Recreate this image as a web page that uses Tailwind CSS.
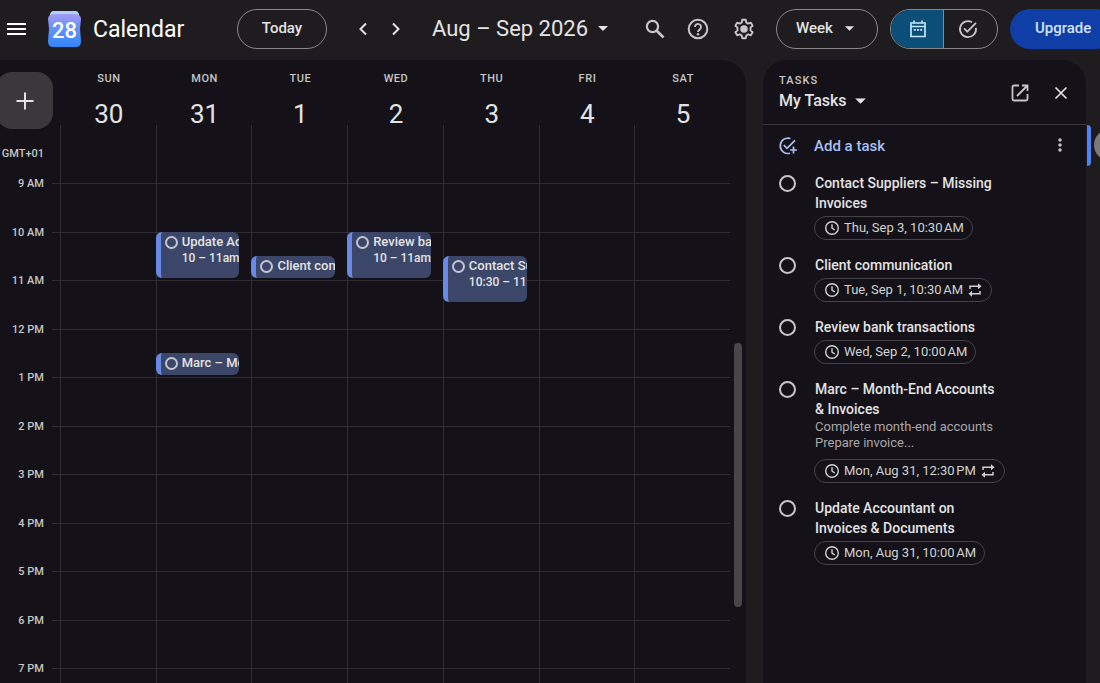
<!DOCTYPE html>
<html lang="en">
<head>
  <meta charset="UTF-8" />
  <meta name="viewport" content="width=device-width, initial-scale=1.0"/>
  <title>Calendar</title>
  <script src="https://cdn.jsdelivr.net/npm/@tailwindcss/browser@4"></script>
</head>
<body class="h-screen overflow-hidden flex flex-col bg-[#1e1c1e] text-[#e3e3e3] font-['Roboto',sans-serif]">

  <!-- icons used more than once -->
  <svg class="hidden">
    <symbol id="clock" viewBox="0 0 16 16">
      <circle cx="8" cy="8" r="6.3" fill="none" stroke="currentColor" stroke-width="1.4"/>
      <path d="M8 4.2V8.2L10.8 10" fill="none" stroke="currentColor" stroke-width="1.4"/>
    </symbol>
    <symbol id="repeat" viewBox="0 0 16 16">
      <path fill="none" stroke="currentColor" stroke-width="1.5" d="M3 7V4.200h9M13 9v2.800H4"/>
      <path fill="currentColor" d="M11 1.200l3.500 3L11 7.200zM5 8.800l-3.500 3 3.500 3z"/>
    </symbol>
    <symbol id="caret" viewBox="0 0 10 5">
      <path fill="currentColor" d="M0 0h10L5 5z"/>
    </symbol>
  </svg>

  <!-- Top bar -->
  <header class="h-[60px] shrink-0 pb-[3px] pl-[4px] flex items-center overflow-hidden whitespace-nowrap">
    <button aria-label="Main menu" class="w-6 shrink-0 flex justify-center text-white">
      <svg class="size-6" viewBox="0 0 24 24"><path fill="currentColor" d="M3 6h19v2H3zM3 11h19v2H3zM3 16h19v2H3z"/></svg>
    </button>
    <a href="#" class="ml-5 shrink-0 flex items-center gap-3 text-white">
      <svg class="w-[33px] h-9" viewBox="0 0 33 36">
        <defs>
          <linearGradient id="logoFill" x1="0" y1="0" x2="0" y2="1">
            <stop offset="0" stop-color="#a79af5"/>
            <stop offset="0.35" stop-color="#6f93f8"/>
            <stop offset="1" stop-color="#3185fc"/>
          </linearGradient>
        </defs>
        <path fill="#a9d3fc" d="M5 0h23q2 0 3 3v4H2V3q1-3 3-3z"/>
        <path fill="url(#logoFill)" d="M0 8q0-4 5-5h23q5 1 5 5l-1 10 1 12q0 6-5 6H5q-5 0-5-6l1-12z"/>
        <text x="16.5" y="27" text-anchor="middle" font-size="22" font-family="Roboto" font-weight="500" fill="#fff">28</text>
      </svg>
      <span class="w-[90px] pt-[3px] text-[23px]">Calendar</span>
    </a>
    <button class="ml-[54px] w-[90px] h-10 shrink-0 rounded-full border border-[#8a888b] text-[15px] font-medium">Today</button>
    <button aria-label="Previous week" class="ml-6 w-6 shrink-0">
      <svg class="size-6" viewBox="0 0 24 24"><path fill="none" stroke="currentColor" stroke-width="2" d="M15 6.5L9.5 12l5.500 5.500"/></svg>
    </button>
    <button aria-label="Next week" class="ml-[9px] w-6 shrink-0">
      <svg class="size-6" viewBox="0 0 24 24"><path fill="none" stroke="currentColor" stroke-width="2" d="M9 6.500L14.500 12L9 17.500"/></svg>
    </button>
    <button class="ml-6 w-[176px] shrink-0 flex items-center justify-between text-[22px]">
      Aug – Sep 2026
      <svg class="w-[10px] h-[5px]"><use href="#caret"/></svg>
    </button>
    <button aria-label="Search" class="ml-[35px] w-6 shrink-0 text-[#c7c5c8]">
      <svg class="size-6" viewBox="0 0 24 24"><circle cx="9.500" cy="9.500" r="5.600" fill="none" stroke="currentColor" stroke-width="2.200"/><path stroke="currentColor" stroke-width="2.600" d="M13.500 13.500L20.500 20.500"/></svg>
    </button>
    <button aria-label="Support" class="ml-[19px] w-6 shrink-0 text-[#c7c5c8]">
      <svg class="size-6" viewBox="0 0 24 24"><circle cx="12" cy="12" r="9.300" fill="none" stroke="currentColor" stroke-width="2"/><path fill="none" stroke="currentColor" stroke-width="1.900" d="M9 10a3 3 0 1 1 4.700 2.400C12.500 13.300 12 13.700 12 15"/><circle cx="12" cy="17.200" r="1.200" fill="currentColor"/></svg>
    </button>
    <button aria-label="Settings" class="ml-[22px] w-6 shrink-0 text-[#c7c5c8]">
      <svg class="size-6" viewBox="0 0 24 24"><path fill="none" stroke="currentColor" stroke-width="1.900" stroke-linejoin="round" d="M10.200 2.800h3.600l.5 2.700 1.900 1.100 2.600-.9 1.800 3.100-2.100 1.800v2.800l2.100 1.800-1.800 3.100-2.600-.9-1.900 1.100-.5 2.700h-3.600l-.5-2.700-1.900-1.100-2.600.9-1.800-3.100 2.100-1.800v-2.800L3.400 8.800l1.800-3.100 2.600.9 1.900-1.100z"/><circle cx="12" cy="12" r="3.800" fill="currentColor"/></svg>
    </button>
    <button class="ml-5 w-[102px] h-10 shrink-0 rounded-full border border-[#8a888b] flex items-center justify-center gap-3 pr-1 text-[15px] font-medium">
      Week
      <svg class="w-[9px] h-[5px]"><use href="#caret"/></svg>
    </button>
    <div class="ml-3 w-[108px] h-10 shrink-0 flex rounded-full border border-[#8a888b] overflow-hidden">
      <button aria-label="Calendar view" class="w-[53px] pl-[2px] flex items-center justify-center border-r border-[#8a888b] bg-[#0b4f78] text-[#c2e7ff]">
        <svg class="size-5" viewBox="0 0 20 20"><path fill="none" stroke="currentColor" stroke-width="1.700" d="M3 4h14v13.500H3zM3 7.500h14M6 1.500V4M14 1.500V4"/><path fill="currentColor" d="M5.800 10h2v1.800h-2zM9 10h2v1.800H9zM12.200 10h2v1.800h-2z"/></svg>
      </button>
      <button aria-label="Tasks view" class="flex-1 flex items-center justify-center pr-[6px] text-[#c7c5c8]">
        <svg class="size-5" viewBox="0 0 20 20"><path fill="none" stroke="currentColor" stroke-width="1.800" d="M14 3.200A8 8 0 1 0 17.900 8.800M6 9.300l3.300 3.300L18 3.800"/></svg>
      </button>
    </div>
    <button class="ml-3 px-[25px] h-10 shrink-0 rounded-full bg-[#0f3fa6] text-[15px] font-medium text-[#d3e3fd]">Upgrade</button>
  </header>

  <div class="flex-1 min-h-0 flex">
    <!-- Week view -->
    <main class="flex-1 min-w-0 flex flex-col overflow-hidden rounded-tr-3xl bg-[#141218]">
      <div class="h-[123px] shrink-0 flex pr-4">
        <div class="w-[60px] shrink-0 flex flex-col justify-between pt-3 pb-[21px]">
          <button aria-label="Create" class="-ml-1 w-[57px] h-[57px] rounded-2xl bg-[#3a383c] flex items-center justify-center">
            <svg class="size-6" viewBox="0 0 24 24"><path stroke="currentColor" stroke-width="2" d="M12 3.500v17M3.500 12h17"/></svg>
          </button>
          <span class="pr-4 text-right text-[11px] leading-4 font-medium text-[#c4c7c5]">GMT+01</span>
        </div>
        <div id="dayHeads" class="flex-1 grid grid-cols-7"></div>
      </div>

      <div class="flex-1 min-h-0 flex">
        <div id="hourLabels" class="w-[60px] shrink-0 h-[534px] grid grid-rows-11"></div>
        <div id="weekGrid" class="flex-1 h-[534px] grid grid-cols-7 grid-rows-[repeat(22,minmax(0,1fr))]"></div>
        <div class="w-4 shrink-0 flex justify-center pt-[160px]">
          <div class="w-2 h-[264px] rounded-full bg-[#484649]"></div>
        </div>
      </div>
    </main>

    <!-- Tasks panel -->
    <aside class="ml-[17px] w-[323px] shrink-0 rounded-t-3xl bg-[#141218]">
      <div class="h-[65px] pt-[2px] pl-4 pr-[13px] flex items-center justify-between border-b border-[#38363a]">
        <div>
          <h2 class="text-[11px] leading-4 font-medium tracking-widest text-[#c4c7c5]">TASKS</h2>
          <button class="flex items-center gap-2 text-[16px] leading-6 font-medium">
            My Tasks
            <svg class="w-[11px] h-[6px]" viewBox="0 0 10 5"><use href="#caret"/></svg>
          </button>
        </div>
        <div class="flex gap-[17px]">
          <button aria-label="Open in full screen" class="text-[#c7c5c8]">
            <svg class="size-6" viewBox="0 0 24 24"><path fill="none" stroke="currentColor" stroke-width="1.800" d="M11 4.500H6A1.500 1.500 0 0 0 4.500 6v12A1.500 1.500 0 0 0 6 19.500h12a1.500 1.500 0 0 0 1.500-1.500v-5M14 4.500h5.500V10M19.500 4.500L9 15"/></svg>
          </button>
          <button aria-label="Close">
            <svg class="size-6" viewBox="0 0 24 24"><path fill="none" stroke="currentColor" stroke-width="1.700" d="M6.500 6.500l11 11M17.500 6.500l-11 11"/></svg>
          </button>
        </div>
      </div>

      <div class="h-[42px] pl-[15px] pr-[14px] flex items-center justify-between">
        <button class="flex items-center gap-4 text-[15px] font-medium text-[#a8c0f5]">
          <svg class="size-5" viewBox="0 0 20 20"><path fill="none" stroke="currentColor" stroke-width="1.700" d="M12.500 2.500A7.700 7.700 0 1 0 12 17.200M5.800 9.200l3.200 3.200L17 4.300M15.500 10.500v7M12 14h7"/></svg>
          Add a task
        </button>
        <button aria-label="List options" class="text-[#c7c5c8]">
          <svg class="size-6" viewBox="0 0 24 24"><g fill="currentColor"><circle cx="12" cy="6" r="1.700"/><circle cx="12" cy="11" r="1.700"/><circle cx="12" cy="16" r="1.700"/></g></svg>
        </button>
      </div>

      <ul id="taskList" class="pt-[6px] pl-4 pr-[84px] flex flex-col gap-[15px]"></ul>
    </aside>

    <!-- Side strip -->
    <nav class="w-[14px] shrink-0 pt-[65px] pl-[1px] flex items-start gap-[3px] overflow-hidden">
      <div class="w-1 h-[41px] shrink-0 rounded-r-sm bg-[#4c84f5]"></div>
      <button aria-label="Account" class="mt-1 size-8 shrink-0 rounded-full bg-[#7b797b]"></button>
    </nav>
  </div>

  <script>
    const days = [['SUN', 30], ['MON', 31], ['TUE', 1], ['WED', 2], ['THU', 3], ['FRI', 4], ['SAT', 5]];
    const hours = ['9 AM', '10 AM', '11 AM', '12 PM', '1 PM', '2 PM', '3 PM', '4 PM', '5 PM', '6 PM', '7 PM'];

    // col = day of week, row = half hours since 9 AM, span in half hours
    const events = [
      { title: 'Update Accountant on Invoices', time: '10 – 11am', col: 2, row: 3, span: 2 },
      { title: 'Client communication', time: '', col: 3, row: 4, span: 1 },
      { title: 'Review bank transactions', time: '10 – 11am', col: 4, row: 3, span: 2 },
      { title: 'Contact Suppliers', time: '10:30 – 11:30am', col: 5, row: 4, span: 2 },
      { title: 'Marc – Month-End Accounts', time: '', col: 2, row: 8, span: 1 },
    ];

    const tasks = [
      { title: 'Contact Suppliers – Missing Invoices', due: 'Thu, Sep 3, 10:30\u202fAM' },
      { title: 'Client communication', due: 'Tue, Sep 1, 10:30\u202fAM', repeat: true },
      { title: 'Review bank transactions', due: 'Wed, Sep 2, 10:00\u202fAM' },
      { title: 'Marc – Month-End Accounts &amp; Invoices', notes: 'Complete month-end accounts<br>Prepare invoice...', due: 'Mon, Aug 31, 12:30\u202fPM', repeat: true },
      { title: 'Update Accountant on Invoices &amp; Documents', due: 'Mon, Aug 31, 10:00\u202fAM' },
    ];

    document.getElementById('dayHeads').innerHTML = days.map(([name, num]) => `
      <div class="flex flex-col">
        <div class="h-[65px] pt-[11px] pl-[2px] flex flex-col items-center">
          <span class="text-[11px] leading-4 font-medium tracking-wider text-[#c4c7c5]">${name}</span>
          <span class="pt-[11px] text-[26px] leading-8">${num}</span>
        </div>
        <div class="flex-1 border-l border-[#302e33]"></div>
      </div>`).join('');

    document.getElementById('hourLabels').innerHTML = hours.map(h => `
      <div class="flex items-start justify-end gap-2">
        <span class="-mt-[7px] text-[11px] leading-4 font-medium text-[#c4c7c5]">${h}</span>
        <span class="w-2 border-t border-[#302e33]"></span>
      </div>`).join('');

    const lines = hours.map((h, i) =>
      `<div class="border-t border-[#302e33]" style="grid-row:${i * 2 + 1} / span 2; grid-column:1 / -1"></div>`).join('');
    const cols = days.map((d, i) =>
      `<div class="border-l border-[#302e33]" style="grid-row:1 / -1; grid-column:${i + 1}"></div>`).join('');
    const cards = events.map(e => `
      <div class="mr-3 mb-[2px] flex overflow-hidden rounded-md bg-[#3c4668] border-l-[5px] border-[#668ae6] pl-1 whitespace-nowrap" style="grid-row:${e.row} / span ${e.span}; grid-column:${e.col}">
        <span class="mt-1 size-[13px] shrink-0 rounded-full border-2 border-[#c4c6d2]"></span>
        <div class="ml-1 pt-[2px]">
          <p class="text-[13px] leading-4 font-medium">${e.title}</p>
          ${e.time ? `<p class="text-[12px] leading-4 font-medium">${e.time}</p>` : ''}
        </div>
      </div>`).join('');
    document.getElementById('weekGrid').innerHTML = lines + cols + cards;

    document.getElementById('taskList').innerHTML = tasks.map((t, i) => `
      <li class="flex items-start gap-[19px]">
        <input id="task${i}" type="checkbox" class="mt-[2px] size-[17px] shrink-0 appearance-none rounded-full border-2 border-[#c7c5c8]" />
        <div class="flex-1 flex flex-col items-start">
          <label for="task${i}" class="text-[14px] leading-5 font-medium">${t.title}</label>
          ${t.notes ? `<p class="mb-[5px] text-[13px] leading-4 text-[#a9a7aa] whitespace-nowrap">${t.notes}</p>` : ''}
          <button class="-ml-px mt-[3px] h-6 pl-[9px] pr-2 flex items-center gap-1 rounded-full border border-[#454347] text-[13px] text-[#d0d2d0] whitespace-nowrap">
            <svg class="size-4"><use href="#clock"/></svg>
            ${t.due}
            ${t.repeat ? '<svg class="size-4"><use href="#repeat"/></svg>' : ''}
          </button>
        </div>
      </li>`).join('');
  </script>
</body>
</html>
